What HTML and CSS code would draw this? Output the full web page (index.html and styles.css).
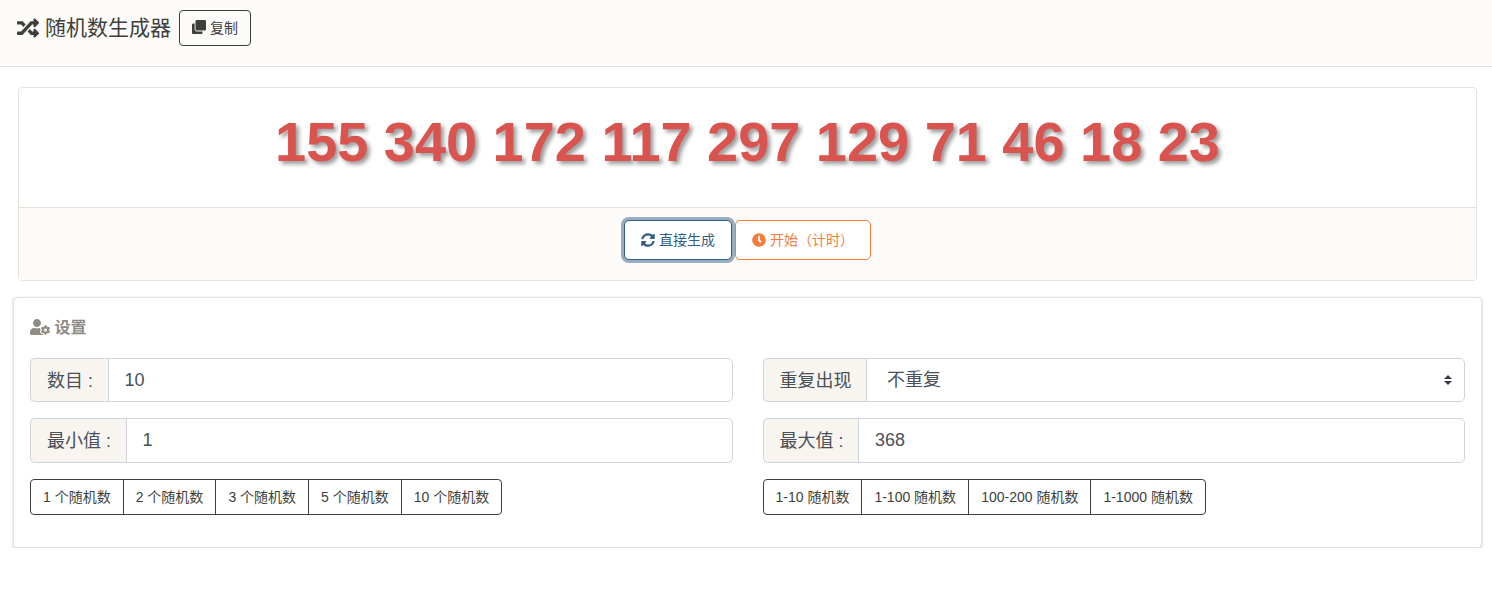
FILE: index.html
```html
<!DOCTYPE html>
<html>
<head>
    <title>随机数生成器</title>
    <meta charset="utf-8">
    <link rel="stylesheet" href="styles.css">
</head>
<body>
<!-- Header -->
<div class="page-header">
    <svg class="icon title-icon" viewBox="0 0 512 512"><path d="M504.971 359.029c9.373 9.373 9.373 24.569 0 33.941l-80 79.984c-15.01 15.01-40.971 4.49-40.971-16.971V416h-58.785a12.004 12.004 0 0 1-8.773-3.812l-70.556-75.596 53.333-57.143L352 336h32v-39.981c0-21.438 25.943-31.998 40.971-16.971l80 79.981zM12 176h84l52.781 56.551 53.333-57.143-70.556-75.596A11.999 11.999 0 0 0 122.785 96H12c-6.627 0-12 5.373-12 12v56c0 6.627 5.373 12 12 12zm372 0v39.984c0 21.46 25.961 31.98 40.971 16.971l80-79.984c9.373-9.373 9.373-24.569 0-33.941l-80-79.981C409.943 24.021 384 34.582 384 56.019V96h-58.785a12.004 12.004 0 0 0-8.773 3.812L96 336H12c-6.627 0-12 5.373-12 12v56c0 6.627 5.373 12 12 12h110.785c3.326 0 6.503-1.381 8.773-3.812L352 176h32z"/></svg>
    <span class="page-title">随机数生成器</span>
    <button class="btn btn-copy">
        <svg class="icon" viewBox="0 0 512 512"><path d="M464 0c26.51 0 48 21.49 48 48v288c0 26.51-21.49 48-48 48H176c-26.51 0-48-21.49-48-48V48c0-26.51 21.49-48 48-48h288M176 416c-44.112 0-80-35.888-80-80V128H48c-26.51 0-48 21.49-48 48v288c0 26.51 21.49 48 48 48h288c26.51 0 48-21.49 48-48v-48H176z"/></svg>
        复制
    </button>
</div>

<div class="main">
    <!-- Result -->
    <div class="card result-card">
        <div class="result-body">
            <div class="result-numbers">155 340 172 117 297 129 71 46 18 23</div>
        </div>
        <div class="result-footer">
            <button class="btn btn-generate">
                <svg class="icon" viewBox="0 0 512 512"><path d="M370.72 133.28C339.458 104.008 298.888 87.962 255.848 88c-77.458.068-144.328 53.178-162.791 126.85-1.344 5.363-6.122 9.15-11.651 9.15H24.103c-7.498 0-13.194-6.807-11.807-14.176C33.933 94.924 134.813 8 256 8c66.448 0 126.791 26.136 171.315 68.685L463.03 40.97C478.149 25.851 504 36.559 504 57.941V192c0 13.255-10.745 24-24 24H345.941c-21.382 0-32.09-25.851-16.971-40.971l41.75-41.749zM32 296h134.059c21.382 0 32.09 25.851 16.971 40.971l-41.75 41.75c31.262 29.273 71.835 45.319 114.876 45.28 77.418-.07 144.315-53.144 162.787-126.849 1.344-5.363 6.122-9.15 11.651-9.15h57.304c7.498 0 13.194 6.807 11.807 14.176C478.067 417.076 377.187 504 256 504c-66.448 0-126.791-26.136-171.315-68.685L48.97 471.03C33.851 486.149 8 475.441 8 454.059V320c0-13.255 10.745-24 24-24z"/></svg>
                直接生成
            </button>
            <button class="btn btn-timer">
                <svg class="icon" viewBox="0 0 512 512"><path d="M256,8C119,8,8,119,8,256S119,504,256,504,504,393,504,256,393,8,256,8Zm92.49,313h0l-20,25a16,16,0,0,1-22.49,2.5h0l-67-49.72a40,40,0,0,1-15-31.23V112a16,16,0,0,1,16-16h32a16,16,0,0,1,16,16V256l58,42.5A16,16,0,0,1,348.49,321Z"/></svg>
                开始（计时）
            </button>
        </div>
    </div>

    <!-- Settings -->
    <div class="card settings-card">
        <div class="settings-title">
            <svg class="icon user-cog" viewBox="0 0 640 512"><path d="M610.5 373.3c2.6-14.1 2.6-28.5 0-42.6l25.8-14.9c3-1.7 4.3-5.2 3.3-8.5-6.7-21.6-18.2-41.2-33.2-57.4-2.3-2.5-6-3.1-9-1.4l-25.8 14.9c-10.9-9.3-23.4-16.5-36.9-21.3v-29.8c0-3.4-2.4-6.4-5.7-7.1-22.3-5-45-4.8-66.2 0-3.3.7-5.7 3.7-5.7 7.1v29.8c-13.5 4.8-26 12-36.9 21.3l-25.8-14.9c-2.9-1.7-6.7-1.1-9 1.4-15 16.2-26.5 35.8-33.2 57.4-1 3.3.4 6.8 3.3 8.5l25.8 14.9c-2.6 14.1-2.6 28.5 0 42.6l-25.8 14.9c-3 1.7-4.3 5.2-3.3 8.5 6.7 21.6 18.2 41.1 33.2 57.4 2.3 2.5 6 3.1 9 1.4l25.8-14.9c10.9 9.3 23.4 16.5 36.9 21.3v29.8c0 3.4 2.4 6.4 5.7 7.1 22.3 5 45 4.8 66.2 0 3.3-.7 5.7-3.7 5.7-7.1v-29.8c13.5-4.8 26-12 36.9-21.3l25.8 14.9c2.9 1.7 6.7 1.1 9-1.4 15-16.2 26.5-35.8 33.2-57.4 1-3.3-.4-6.8-3.3-8.5l-25.8-14.9zM496 400.5c-26.8 0-48.5-21.8-48.5-48.5s21.8-48.5 48.5-48.5 48.5 21.8 48.5 48.5-21.7 48.5-48.5 48.5zM224 256c70.7 0 128-57.3 128-128S294.7 0 224 0 96 57.3 96 128s57.3 128 128 128zm201.2 226.5c-2.3-1.2-4.6-2.6-6.8-3.9l-7.9 4.6c-6 3.4-12.8 5.3-19.6 5.3-10.9 0-21.4-4.6-28.9-12.6-18.3-19.8-32.3-43.9-40.2-69.6-5.5-17.7 1.9-36.4 17.9-45.7l7.9-4.6c-.1-2.6-.1-5.2 0-7.8l-7.9-4.6c-16-9.2-23.4-28-17.9-45.7.9-2.9 2.2-5.8 3.2-8.7-3.8-.3-7.5-1.2-11.4-1.2h-16.7c-22.2 10.2-46.9 16-72.9 16s-50.6-5.8-72.9-16h-16.7C60.2 288 0 348.2 0 422.4V464c0 26.5 21.5 48 48 48h352c10.1 0 19.5-3.2 27.2-8.5-1.2-3.8-2-7.7-2-11.8v-9.2z"/></svg>
            设置
        </div>
        <div class="settings-grid">
            <div class="settings-col">
                <div class="input-group">
                    <span class="input-label">数目 :</span>
                    <input class="input-field" type="text" value="10">
                </div>
                <div class="input-group input-group-tall">
                    <span class="input-label">最小值 :</span>
                    <input class="input-field" type="text" value="1">
                </div>
                <div class="btn-group">
                    <button class="btn">1 个随机数</button>
                    <button class="btn">2 个随机数</button>
                    <button class="btn">3 个随机数</button>
                    <button class="btn">5 个随机数</button>
                    <button class="btn">10 个随机数</button>
                </div>
            </div>
            <div class="settings-col">
                <div class="input-group">
                    <span class="input-label">重复出现</span>
                    <select class="input-field input-select">
                        <option>不重复</option>
                        <option>可重复</option>
                    </select>
                </div>
                <div class="input-group input-group-tall">
                    <span class="input-label">最大值 :</span>
                    <input class="input-field" type="text" value="368">
                </div>
                <div class="btn-group">
                    <button class="btn">1-10 随机数</button>
                    <button class="btn">1-100 随机数</button>
                    <button class="btn">100-200 随机数</button>
                    <button class="btn">1-1000 随机数</button>
                </div>
            </div>
        </div>
    </div>
</div>
</body>
</html>
```

FILE: styles.css
```css
* {
    box-sizing: border-box;
}
body {
    margin: 0;
    font-family: "Liberation Sans", "Noto Sans CJK SC", sans-serif;
    color: #3e3f3a;
    background-color: #fff;
}
.icon {
    width: 1em;
    height: 1em;
    fill: currentColor;
    vertical-align: -0.125em;
}

/* Header */
.page-header {
    display: flex;
    align-items: center;
    height: 67px;
    padding: 0 0 11px 17px;
    background-color: #fdfbf9;
    border-bottom: 1px solid #e8e1d9;
}
.title-icon {
    width: 22px;
    height: 22px;
    margin-right: 6px;
}
.page-title {
    font-size: 21px;
    margin-right: 8px;
    padding-bottom: 3px;
}

/* Buttons */
.btn {
    font-family: inherit;
    font-size: 14px;
    color: #3e3f3a;
    background-color: #fff;
    border: 1px solid #3e3f3a;
    border-radius: 4px;
    padding: 0 12px 2px;
    height: 36px;
    white-space: nowrap;
}
.btn-copy {
    background-color: transparent;
    width: 72px;
    padding: 0 0 2px;
}
.btn-generate,
.btn-timer {
    height: 40px;
    border-radius: 5px;
    padding: 0 0 2px;
}
.btn-generate {
    color: #325d88;
    border-color: #325d88;
    box-shadow: 0 0 0 3px rgba(50, 93, 136, 0.5);
    width: 108px;
}
.btn-timer {
    color: #f47c3c;
    border-color: #f47c3c;
    width: 136px;
    margin-left: 3px;
}

/* Cards */
.main {
    padding: 20px 10px 0 13px;
}
.card {
    background-color: #fff;
    border: 1px solid #e8e1d9;
    border-radius: 4px;
}
.result-card {
    margin: 0 5px 16px 5px;
}
.result-body {
    height: 119px;
    padding-top: 19px;
    text-align: center;
}
.result-numbers {
    font-size: 55.9px;
    font-weight: bold;
    line-height: 70px;
    color: #d9534f;
    text-shadow: 3px 3px 4px #999;
}
.result-footer {
    display: flex;
    justify-content: center;
    align-items: flex-start;
    height: 73px;
    padding-top: 12px;
    background-color: #fdfbf9;
    border-top: 1px solid #e8e1d9;
}

/* Settings */
.settings-card {
    height: 251px;
    padding: 20px 16px;
    box-shadow: 0 1px 3px rgba(0, 0, 0, 0.2);
}
.settings-title {
    font-size: 16px;
    font-weight: bold;
    color: #8e8c84;
    line-height: 20px;
    margin-bottom: 20px;
}
.user-cog {
    width: 20px;
    height: 16px;
    vertical-align: -2px;
}
.settings-grid {
    display: grid;
    grid-template-columns: 1fr 1fr;
    gap: 30px;
}
.input-group {
    display: flex;
    height: 44px;
    margin-bottom: 16px;
    font-size: 18px;
}
.input-group-tall {
    height: 45px;
}
.input-label {
    display: flex;
    align-items: center;
    padding: 0 14.5px 3px 16px;
    color: #495057;
    background-color: #f8f5f0;
    border: 1px solid #ced4da;
    border-right: 0;
    border-radius: 5px 0 0 5px;
}
.input-field {
    flex: 1;
    min-width: 0;
    padding: 0 16px;
    font-family: inherit;
    font-size: 18px;
    color: #495057;
    background-color: #fff;
    border: 1px solid #ced4da;
    border-radius: 0 5px 5px 0;
}
.input-select {
    padding-left: 20px;
    appearance: none;
    background: #fff url("data:image/svg+xml,%3csvg xmlns='http://www.w3.org/2000/svg' width='8' height='10' viewBox='0 0 8 10'%3e%3cpath fill='%23343a40' d='M4 0 0 4h8zM4 10 0 6h8z'/%3e%3c/svg%3e") no-repeat right 12px center;
}
.btn-group {
    display: flex;
}
.btn-group .btn {
    border-radius: 0;
    margin-left: -1px;
}
.btn-group .btn:first-child {
    margin-left: 0;
    border-radius: 4px 0 0 4px;
}
.btn-group .btn:last-child {
    border-radius: 0 4px 4px 0;
}
```
